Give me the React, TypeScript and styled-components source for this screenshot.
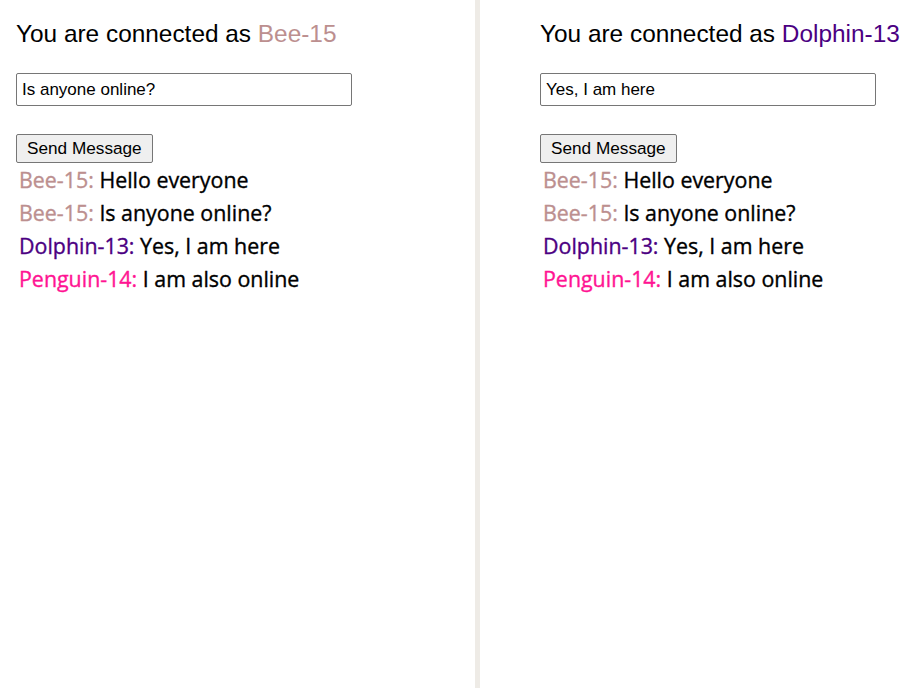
import React from "react";
import styled, { createGlobalStyle } from "styled-components";

const Global = createGlobalStyle`
  html, body { margin: 0; padding: 0; background: #ffffff; }
  body { font-family: "Liberation Sans", Arial, sans-serif; }
`;

const Page = styled.div`
  display: grid;
  grid-template-columns: 475px 5px 1fr;
  width: 920px;
  height: 688px;
  overflow: hidden;
`;

const Divider = styled.div`
  background: #eeebe6;
`;

const Panel = styled.div<{ $padLeft: number }>`
  display: flex;
  flex-direction: column;
  align-items: flex-start;
  padding: 20px 0 0 ${(p) => p.$padLeft}px;
  min-width: 0;
`;

const Heading = styled.div`
  margin: 0;
  font-family: "Liberation Sans", Arial, sans-serif;
  font-size: 24.4px;
  line-height: 28px;
  color: #000;
  white-space: nowrap;
`;

const Name = styled.span<{ $color: string }>`
  color: ${(p) => p.$color};
`;

const Input = styled.input`
  box-sizing: border-box;
  margin-top: 25px;
  width: 336px;
  height: 33px;
  padding: 0 5px;
  border: 1px solid #767676;
  border-radius: 2px;
  font-family: "Liberation Sans", Arial, sans-serif;
  font-size: 17px;
  color: #000;
  background: #fff;
  outline: none;
`;

const Button = styled.button`
  box-sizing: border-box;
  margin-top: 28px;
  height: 29px;
  padding: 0 10px;
  border: 1px solid #767676;
  border-radius: 2px;
  background: #efefef;
  font-family: "Liberation Sans", Arial, sans-serif;
  font-size: 17.2px;
  color: #000;
  cursor: pointer;
`;

const Messages = styled.div`
  padding: 0 0 0 3px;
  display: flex;
  flex-direction: column;
`;

const Message = styled.div`
  font-family: "Open Sans", "Noto Sans", sans-serif;
  font-size: 21.4px;
  line-height: 33px;
  color: #000;
  -webkit-text-stroke: 0.35px currentColor;
  white-space: nowrap;
`;

const COLORS: Record<string, string> = {
  "Bee-15": "rosybrown",
  "Dolphin-13": "indigo",
  "Penguin-14": "deeppink",
};

const MESSAGES = [
  { from: "Bee-15", text: "Hello everyone" },
  { from: "Bee-15", text: "Is anyone online?" },
  { from: "Dolphin-13", text: "Yes, I am here" },
  { from: "Penguin-14", text: "I am also online" },
];

function ChatPanel({ me, draft, padLeft }: { me: string; draft: string; padLeft: number }) {
  return (
    <Panel $padLeft={padLeft}>
      <Heading>
        You are connected as <Name $color={COLORS[me]}>{me}</Name>
      </Heading>
      <Input defaultValue={draft} />
      <Button>Send Message</Button>
      <Messages>
        {MESSAGES.map((m, i) => (
          <Message key={i}>
            <Name $color={COLORS[m.from]}>{m.from}:</Name> {m.text}
          </Message>
        ))}
      </Messages>
    </Panel>
  );
}

export default function App() {
  return (
    <>
      <Global />
      <Page>
        <ChatPanel me="Bee-15" draft="Is anyone online?" padLeft={16} />
        <Divider />
        <ChatPanel me="Dolphin-13" draft="Yes, I am here" padLeft={60} />
      </Page>
    </>
  );
}
